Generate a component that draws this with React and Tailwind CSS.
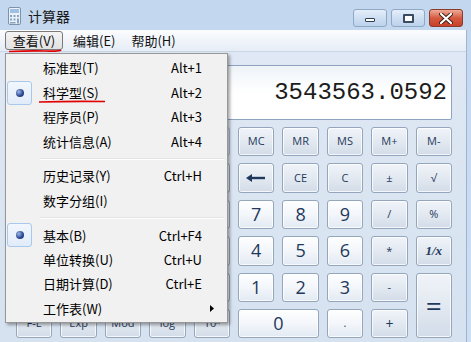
import { useState } from "react";

const keyTone = {
  num: "bg-linear-to-b from-[#fdfeff] via-[#f3f6fa] to-[#e3eaf3]",
  op: "bg-linear-to-b from-[#f0f4f9] via-[#e3e9f1] to-[#d2dce8]",
};

function Key({ children, kind = "op", className = "" }) {
  return (
    <div
      className={`flex items-center justify-center rounded-[3px] border border-[#95a5bb] shadow-[inset_0_0_0_1px_rgba(255,255,255,0.75)] text-[#1e395b] ${keyTone[kind]} ${className}`}
    >
      {children}
    </div>
  );
}

function Bullet() {
  return (
    <div className="flex h-[24px] w-[25px] items-center justify-center rounded-[3px] border border-[#a8c8ee] bg-linear-to-b from-[#f2f7fd] to-[#e1ecf9]">
      <div className="h-[8px] w-[8px] rounded-full bg-[radial-gradient(circle_at_35%_35%,#9fb8e8,#27438d_60%,#132a66)]" />
    </div>
  );
}

function MenuItem({ label, keys, checked, arrow }) {
  return (
    <div className="flex h-[24.4px] items-center">
      <div className="flex w-[36px] items-center">{checked && <Bullet />}</div>
      <div className="flex-1 text-[13px] text-black">{label}</div>
      <div className="text-right text-[13px] text-black">{keys}</div>
      <div className="flex w-[24px] items-center pl-[8px]">
        {arrow && (
          <svg width="4" height="7" viewBox="0 0 4 7">
            <path d="M0 0 L4 3.5 L0 7 Z" fill="#000" />
          </svg>
        )}
      </div>
    </div>
  );
}

function Sep() {
  return (
    <div className="flex h-[10.4px] items-center pl-[33px] pr-[2px]">
      <div className="w-full border-t border-b border-t-[#e2e3e3] border-b-white" />
    </div>
  );
}

function ViewMenu() {
  return (
    <div className="absolute left-[5px] top-[53px] h-[270px] w-[223px] border border-[#979797] bg-[#f1f1f1] px-[1px] pt-[2px] shadow-[2px_2px_3px_rgba(0,0,0,0.35)] font-['Noto_Sans_CJK_SC',sans-serif]">
      <MenuItem label="标准型(T)" keys="Alt+1" />
      <MenuItem label="科学型(S)" keys="Alt+2" checked />
      <MenuItem label="程序员(P)" keys="Alt+3" />
      <MenuItem label="统计信息(A)" keys="Alt+4" />
      <Sep />
      <MenuItem label="历史记录(Y)" keys="Ctrl+H" />
      <MenuItem label="数字分组(I)" />
      <Sep />
      <MenuItem label="基本(B)" keys="Ctrl+F4" checked />
      <MenuItem label="单位转换(U)" keys="Ctrl+U" />
      <MenuItem label="日期计算(D)" keys="Ctrl+E" />
      <MenuItem label="工作表(W)" arrow />
    </div>
  );
}

function TitleBar() {
  return (
    <div className="flex h-[30px] items-start">
      <svg className="ml-[8px] mt-[7px]" width="13" height="18" viewBox="0 0 13 18">
        <rect x="0.5" y="0.5" width="12" height="17" rx="1.5" fill="#e9f0f7" stroke="#7d93ad" />
        <rect x="2" y="2" width="9" height="4" fill="#9fc0e4" />
        <rect x="2" y="8" width="2" height="2" fill="#8aa3c0" />
        <rect x="5.5" y="8" width="2" height="2" fill="#8aa3c0" />
        <rect x="9" y="8" width="2" height="2" fill="#8aa3c0" />
        <rect x="2" y="11.5" width="2" height="2" fill="#8aa3c0" />
        <rect x="5.5" y="11.5" width="2" height="2" fill="#8aa3c0" />
        <rect x="9" y="11.5" width="2" height="5" fill="#8aa3c0" />
        <rect x="2" y="15" width="5.5" height="1.5" fill="#8aa3c0" />
      </svg>
      <div className="ml-[7px] mt-[6px] text-[14px] leading-[20px] text-[#1a1a1a] font-['Noto_Sans_CJK_SC',sans-serif]">
        计算器
      </div>
      <div className="ml-auto mr-[8px] mt-[9px] flex gap-[4px]">
        <div className="flex h-[18px] w-[34px] items-center justify-center rounded-[3px] border border-[#8fa8c6] bg-linear-to-b from-[#e4eef9] via-[#cfdff2] to-[#bcd2ec]">
          <div className="mt-[3px] h-[4px] w-[10px] rounded-[1px] border border-[#2f3f55] bg-white" />
        </div>
        <div className="flex h-[18px] w-[34px] items-center justify-center rounded-[3px] border border-[#8fa8c6] bg-linear-to-b from-[#e4eef9] via-[#cfdff2] to-[#bcd2ec]">
          <div className="h-[9px] w-[11px] rounded-[1px] border-[2px] border-[#3a4b62] bg-white" />
        </div>
        <div className="flex h-[18px] w-[34px] items-center justify-center rounded-[3px] border border-[#8a3b2c] bg-linear-to-b from-[#eeaa98] via-[#d45a40] to-[#c8402a]">
          <svg width="14" height="11" viewBox="0 0 14 11">
            <path d="M2 1 L12 10 M12 1 L2 10" stroke="#3b1a12" strokeWidth="4" strokeLinecap="round" />
            <path d="M2 1 L12 10 M12 1 L2 10" stroke="#fff" strokeWidth="2.2" strokeLinecap="round" />
          </svg>
        </div>
      </div>
    </div>
  );
}

function MenuBar() {
  return (
    <div className="flex h-[22px] items-center border-b border-[#c9d6e6] bg-linear-to-b from-[#fbfcfe] to-[#e6edf6] text-[13px] text-[#111] font-['Noto_Sans_CJK_SC',sans-serif]">
      <div className="ml-[5px] flex h-[19px] w-[58px] items-center justify-center rounded-[3px] border border-[#7a7a7a] bg-linear-to-b from-[#f4f4f4] to-[#e2e2e2]">
        查看(V)
      </div>
      <div className="ml-[10px]">编辑(E)</div>
      <div className="ml-[16px]">帮助(H)</div>
    </div>
  );
}

function Calculator() {
  // left half sits under the open menu; only the bottom row's labels peek out
  const bottomRow = ["F-E", "Exp", "Mod", "log", "10ˣ"];
  const [value] = useState("3543563.0592");
  const small = "text-[11px] font-['Open_Sans',sans-serif]";
  const big = "text-[18px] font-['Open_Sans',sans-serif]";
  const blanks = (k) => [0, 1, 2, 3, 4].map((i) => <Key key={k + i} />);

  return (
    <div className="h-[290px] bg-linear-to-b from-[#dfe8f4] to-[#d6e2f0] pl-[16px] pt-[13px]">
      <div className="flex h-[55px] w-[436px] items-center justify-end rounded-[2px] border border-[#8ea3bf] bg-linear-to-b from-[#eef3f9] via-white to-white pr-[4px]">
        <span className="text-[24px] text-[#1c1c1c] font-['Liberation_Mono',monospace]">{value}</span>
      </div>
      <div className="mt-[7px] grid w-[436px] grid-cols-10 auto-rows-[29.4px] gap-x-[8px] gap-y-[7px]">
        <div className="col-span-5 rounded-[3px] border border-[#a9b8cb]" />
        <Key className={small}>MC</Key>
        <Key className={small}>MR</Key>
        <Key className={small}>MS</Key>
        <Key className={small}>M+</Key>
        <Key className={small}>M-</Key>

        <div />
        <Key />
        <Key />
        <Key />
        <Key />
        <Key>
          <svg width="20" height="8" viewBox="0 0 20 8">
            <path d="M5 4 H19" stroke="#1e395b" strokeWidth="2.4" />
            <path d="M0 4 L6 0 V8 Z" fill="#1e395b" />
          </svg>
        </Key>
        <Key className={small}>CE</Key>
        <Key className={small}>C</Key>
        <Key className={small}>±</Key>
        <Key className={small}>√</Key>

        {blanks("b")}
        <Key kind="num" className={big}>7</Key>
        <Key kind="num" className={big}>8</Key>
        <Key kind="num" className={big}>9</Key>
        <Key className={small}>/</Key>
        <Key className={small}>%</Key>

        {blanks("c")}
        <Key kind="num" className={big}>4</Key>
        <Key kind="num" className={big}>5</Key>
        <Key kind="num" className={big}>6</Key>
        <Key className={small}>*</Key>
        <Key className="text-[13px] font-bold italic font-['Liberation_Serif',serif]">1/x</Key>

        {blanks("d")}
        <Key kind="num" className={big}>1</Key>
        <Key kind="num" className={big}>2</Key>
        <Key kind="num" className={big}>3</Key>
        <Key className={small}>-</Key>
        <Key className="row-span-2 text-[28px] font-['Open_Sans',sans-serif]">=</Key>

        {bottomRow.map((t, i) => (
          <Key key={"e" + i} className={small}>{t}</Key>
        ))}
        <Key kind="num" className={"col-span-2 " + big}>0</Key>
        <Key kind="num" className={small}>.</Key>
        <Key className={"text-[14px] font-['Open_Sans',sans-serif]"}>+</Key>
      </div>
    </div>
  );
}

export default function App() {
  return (
    <div className="relative h-[342px] w-[471px] overflow-hidden bg-linear-to-b from-[#c3d7ef] to-[#cddff3]">
      <TitleBar />
      <div className="mr-[4px] border-r border-[#9db3cf]">
        <MenuBar />
        <Calculator />
      </div>
      <ViewMenu />
      {/* red marks drawn over the screenshot */}
      <svg className="absolute left-0 top-0" width="471" height="342" viewBox="0 0 471 342">
        <path d="M9 51.5 Q30 50.5 45 51 T61 50" stroke="#e00000" strokeWidth="1.6" fill="none" />
        <path d="M39 102 Q70 101 105 101.5" stroke="#e00000" strokeWidth="1.6" fill="none" />
      </svg>
    </div>
  );
}
